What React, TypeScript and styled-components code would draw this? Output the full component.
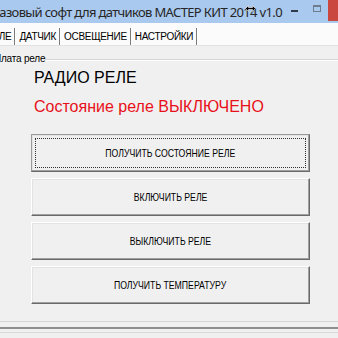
import React from 'react';
import styled, { createGlobalStyle } from 'styled-components';

const GlobalStyle = createGlobalStyle`
   html, body {
      margin: 0;
      padding: 0;
      background: #f0f0f0;
      overflow: hidden;
   }
   * {
      box-sizing: border-box;
   }
`;

const tabs = ['РЕЛЕ', 'ДАТЧИК', 'ОСВЕЩЕНИЕ', 'НАСТРОЙКИ'];

const buttons = [
   { label: 'ПОЛУЧИТЬ СОСТОЯНИЕ РЕЛЕ', focused: true },
   { label: 'ВКЛЮЧИТЬ РЕЛЕ', focused: false },
   { label: 'ВЫКЛЮЧИТЬ РЕЛЕ', focused: false },
   { label: 'ПОЛУЧИТЬ ТЕМПЕРАТУРУ', focused: false },
];

function App() {
   return (
      <Screen>
         <GlobalStyle />
         <Window>
            <TitleBar>
               <Title>Базовый софт для датчиков МАСТЕР КИТ 2014 v1.0</Title>
               <Cursor width='11' height='7' viewBox='0 0 11 7'>
                  <path
                     d='M0.5 3.5 L3.5 0.5 L3.5 2.5 L7.5 2.5 L7.5 0.5 L10.5 3.5 L7.5 6.5 L7.5 4.5 L3.5 4.5 L3.5 6.5 Z'
                     fill='#000'
                     stroke='#fff'
                     strokeWidth='0.6'
                  />
               </Cursor>
               <Controls>
                  <MinButton>
                     <MinGlyph />
                  </MinButton>
                  <MaxButton>
                     <MaxGlyph />
                  </MaxButton>
                  <CloseButton />
               </Controls>
            </TitleBar>
            <TabStrip>
               {tabs.map((t) => (
                  <Tab key={t}>{t}</Tab>
               ))}
            </TabStrip>
            <Panel>
               <GroupBox>
                  <GroupLegend>Плата реле</GroupLegend>
                  <GroupContent>
                     <Heading>РАДИО РЕЛЕ</Heading>
                     <Status>Состояние реле ВЫКЛЮЧЕНО</Status>
                     <ButtonList>
                        {buttons.map((b) => (
                           <PushButton key={b.label} $focused={b.focused}>
                              <ButtonText>{b.label}</ButtonText>
                           </PushButton>
                        ))}
                     </ButtonList>
                  </GroupContent>
               </GroupBox>
            </Panel>
            <Footer />
         </Window>
      </Screen>
   );
}

const Screen = styled.div`
   width: 338px;
   height: 338px;
   overflow: hidden;
   background: #f0f0f0;
`;

const Window = styled.div`
   width: 397px;
   margin-left: -24px;
   display: flex;
   flex-direction: column;
`;

const TitleBar = styled.div`
   position: relative;
   height: 23px;
   display: flex;
   align-items: flex-start;
   background: #a9c9ee;
`;

const Title = styled.span`
   padding-left: 16px;
   padding-top: 3px;
   font-family: 'Noto Sans', sans-serif;
   font-size: 13px;
   letter-spacing: -0.65px;
   line-height: 18px;
   color: #262626;
   white-space: nowrap;
`;

const Cursor = styled.svg`
   position: absolute;
   left: 269px;
   top: 5px;
`;

const Controls = styled.div`
   margin-left: auto;
   display: flex;
   height: 21px;
`;

const MinButton = styled.div`
   width: 25px;
   display: flex;
   justify-content: center;
   padding-top: 10px;
`;

const MinGlyph = styled.div`
   width: 7px;
   height: 2px;
   background: #2f3a48;
`;

const MaxButton = styled.div`
   width: 21px;
   display: flex;
   justify-content: center;
   padding-top: 5px;
`;

const MaxGlyph = styled.div`
   width: 8px;
   height: 7px;
   border: 1px solid #6f7c8c;
   border-top-width: 2px;
`;

const CloseButton = styled.div`
   width: 46px;
   background: #c9473f;
`;

const TabStrip = styled.div`
   height: 23px;
   display: flex;
   align-items: flex-end;
   padding-left: 6px;
   background: #fbfbfb;
   border-bottom: 1px solid #e2e2e2;
`;

const Tab = styled.div`
   height: 17px;
   padding: 0 3px 0 4px;
   display: flex;
   align-items: center;
   font-family: 'Liberation Sans', Arial, sans-serif;
   font-size: 10px;
   letter-spacing: -0.3px;
   color: #000;
   border-right: 1px solid #7a7a7a;
   box-shadow: 1px 0 0 #ffffff;
`;

const Panel = styled.div`
   height: 283px;
   padding-top: 7px;
   background: #f0f0f0;
   border-bottom: 2px solid #8e8e8e;
`;

const GroupBox = styled.fieldset`
   margin: 0 0 0 8px;
   padding: 0;
   height: 269px;
   border: 1px solid #d5d5d5;
   box-shadow: inset 1px 1px 0 #ffffff;
`;

const GroupLegend = styled.legend`
   margin-left: 9px;
   padding: 0;
   font-family: 'Liberation Sans', Arial, sans-serif;
   font-size: 10px;
   letter-spacing: -0.2px;
   line-height: 12px;
   color: #000;
`;

const GroupContent = styled.div`
   padding-left: 46px;
   display: flex;
   flex-direction: column;
`;

const Heading = styled.div`
   margin: 4px 0 0 3px;
   font-family: 'Liberation Sans', Arial, sans-serif;
   font-size: 16px;
   line-height: 18px;
   color: #000;
`;

const Status = styled.div`
   margin: 11px 0 0 3px;
   font-family: 'Liberation Sans', Arial, sans-serif;
   font-size: 16px;
   line-height: 18px;
   color: #e8101a;
`;

const ButtonList = styled.div`
   margin-top: 18px;
   display: flex;
   flex-direction: column;
   gap: 6px;
`;

const PushButton = styled.div<{ $focused: boolean }>`
   width: 279px;
   height: 38px;
   display: flex;
   align-items: center;
   justify-content: center;
   background: #f0f0f0;
   border-top: 1px solid ${(p) => (p.$focused ? '#9a9a9a' : '#ffffff')};
   border-left: 1px solid ${(p) => (p.$focused ? '#9a9a9a' : '#ffffff')};
   border-right: 1px solid #6a6a6a;
   border-bottom: 1px solid #6a6a6a;
   box-shadow: inset -1px -1px 0 #a0a0a0, inset 1px 1px 0 #e3e3e3;
   outline: ${(p) => (p.$focused ? '1px dotted #303030' : 'none')};
   outline-offset: -5px;
`;

const ButtonText = styled.span`
   display: inline-block;
   font-family: 'Liberation Sans', Arial, sans-serif;
   font-size: 11px;
   line-height: 12px;
   color: #000;
   white-space: nowrap;
   transform: scaleX(0.79);
`;

const Footer = styled.div`
   height: 10px;
   margin-top: 3px;
   border-top: 1px solid #d9d9d9;
   background: #f0f0f0;
`;

export default App;
